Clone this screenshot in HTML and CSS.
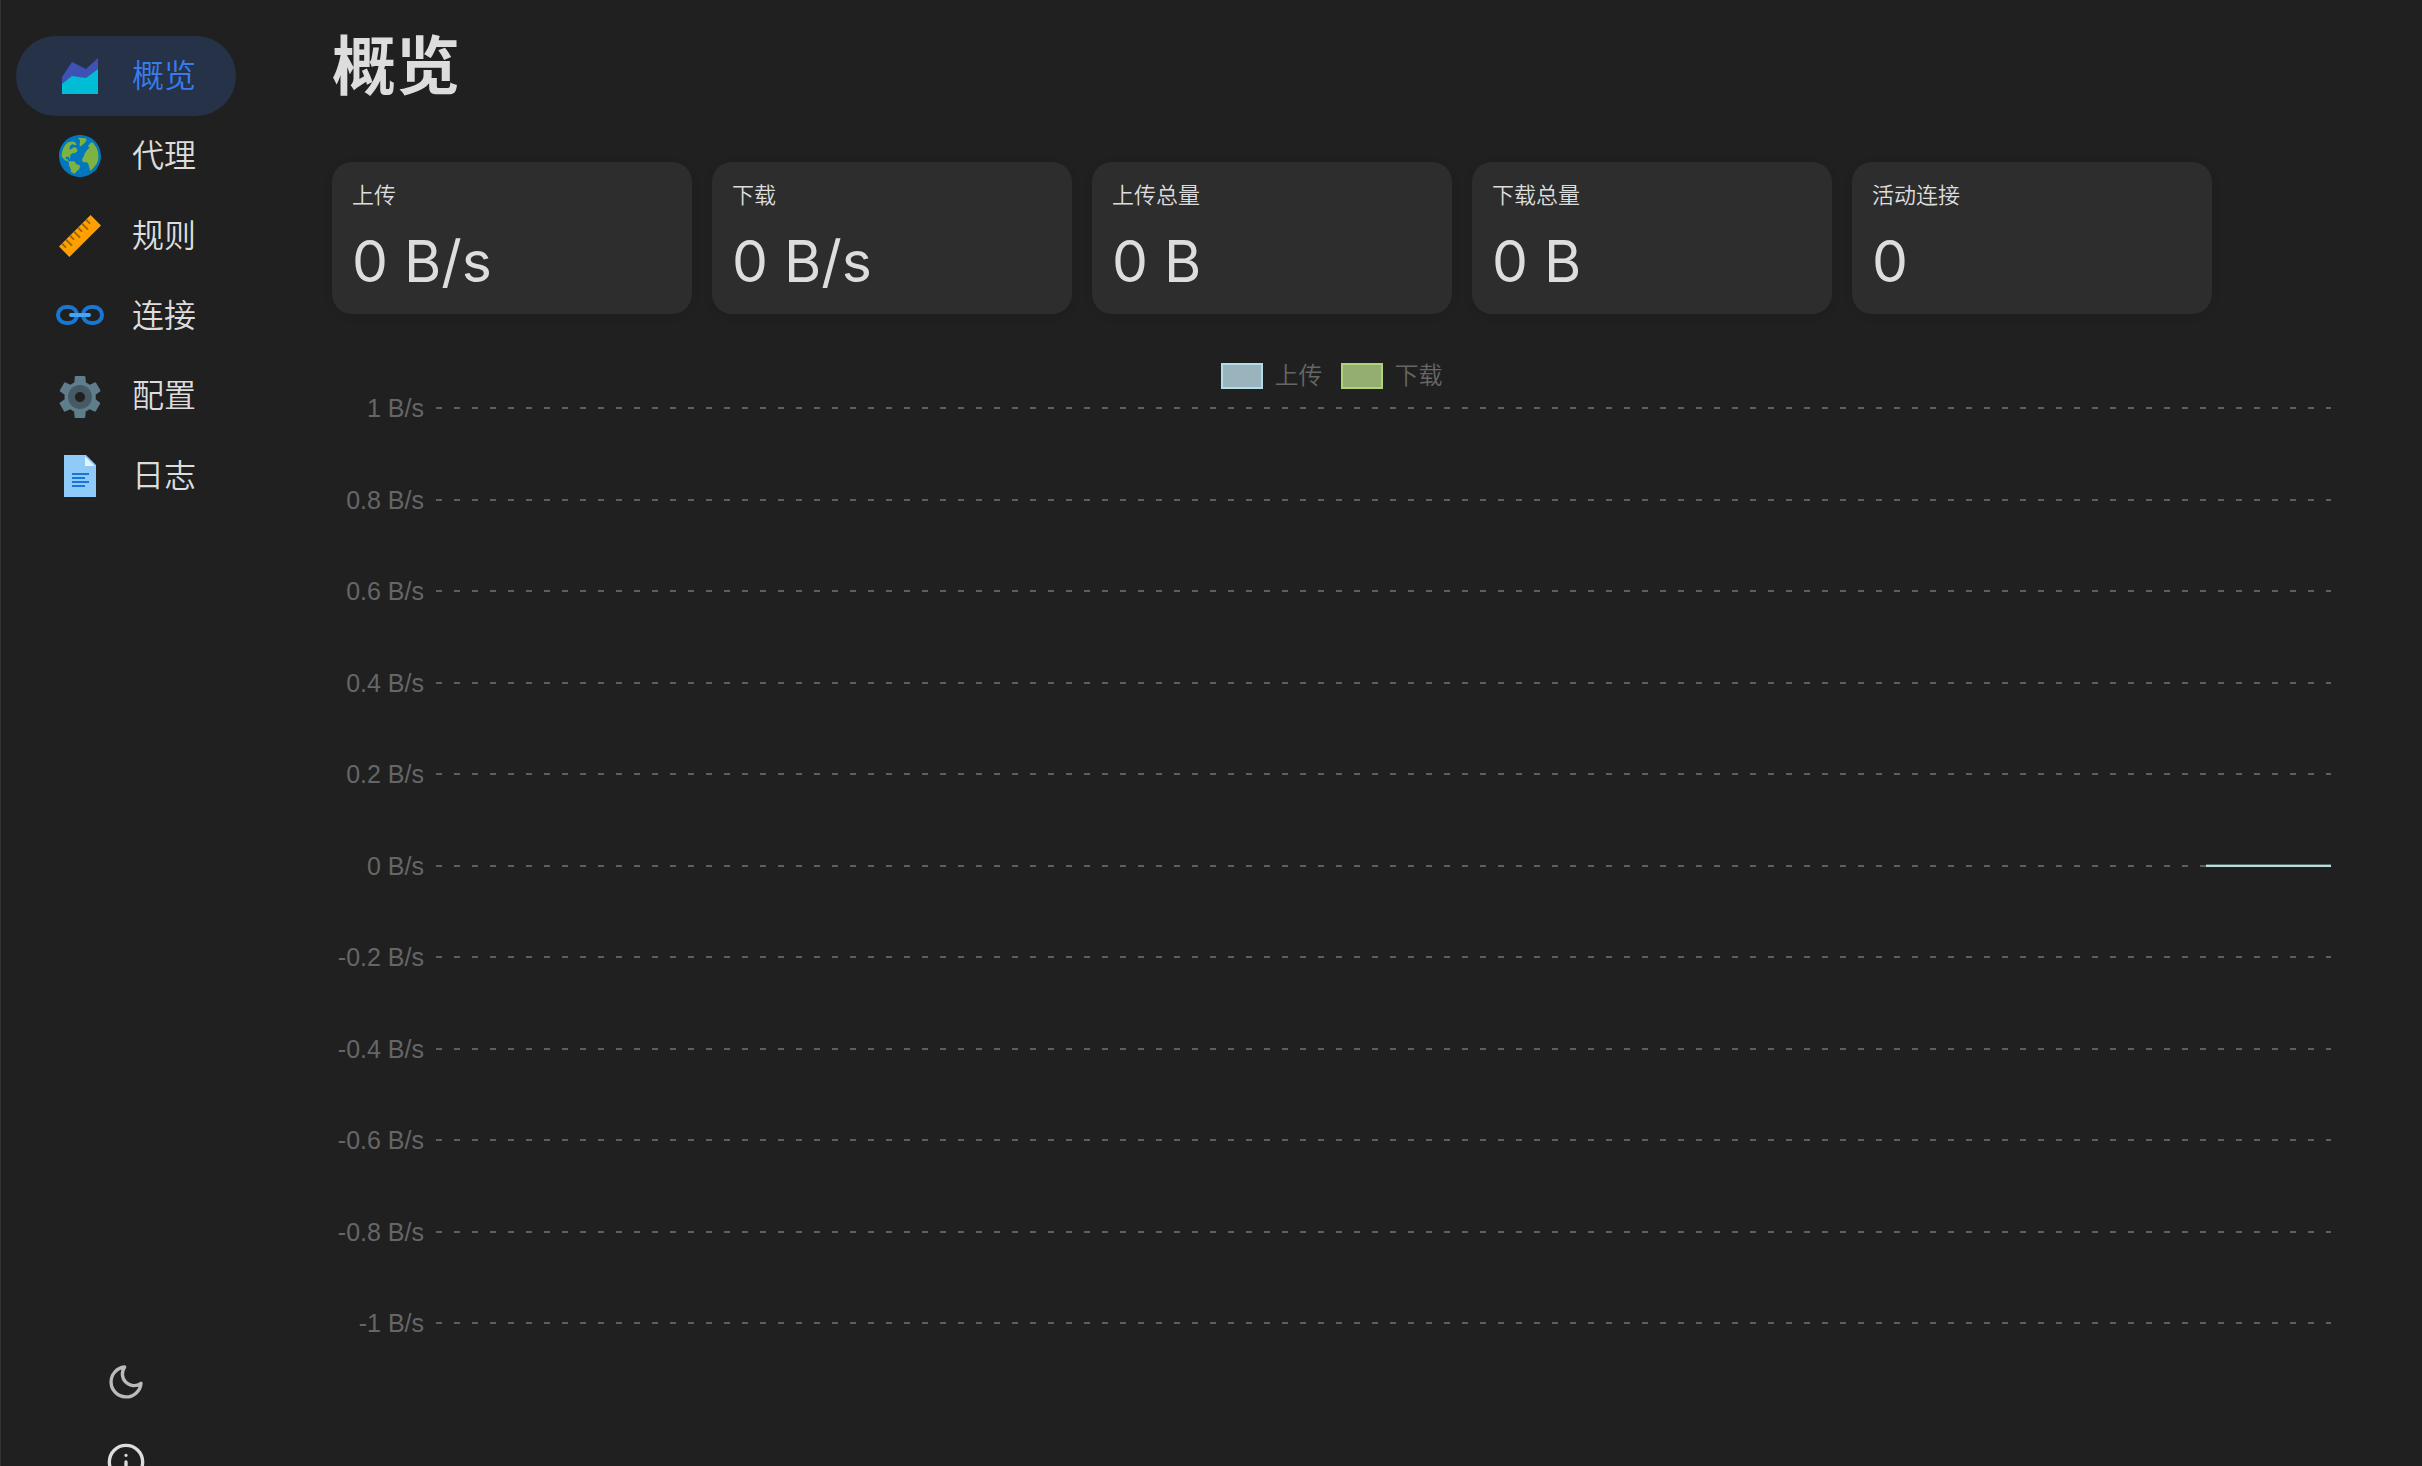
FILE: index.html
```
<!DOCTYPE html>
<html lang="zh-CN">
<head>
    <meta charset="UTF-8">
    <meta name="viewport" content="width=device-width, initial-scale=1.0">
    <title>概览</title>
    <link rel="stylesheet" href="styles.css">
</head>
<body>

    <aside class="sidebar">
        <nav class="nav">
            <a class="nav-item active" href="#">
                <svg class="nav-icon" viewBox="0 0 48 48">
                    <path fill="#3f51b5" d="M42 37H6V25l10-15 14 7L42 6z"/>
                    <path fill="#00bcd4" d="M42 42H6V32l10-8 14 2 12-9z"/>
                </svg>
                <span>概览</span>
            </a>
            <a class="nav-item" href="#proxies">
                <svg class="nav-icon" viewBox="0 0 48 48">
                    <circle cx="24" cy="24" r="20" fill="#7cb342"/>
                    <path fill="#0277bd" d="M45 24c0 11.7-9.5 21-21 21S3 35.700 3 24S12.300 3 24 3s21 9.300 21 21m-21.200 9.700c0-.4-.2-.6-.6-.8c-1.300-.4-2.500-.4-3.600-1.500c-.2-.4-.2-.8-.4-1.300c-.4-.4-1.500-.6-2.100-.8h-4.200c-.6-.2-1.100-1.100-1.500-1.700c0-.2 0-.6-.4-.6c-.4-.2-.8.2-1.300 0c-.2-.2-.2-.4-.2-.6c0-.6.4-1.300.8-1.700c.6-.4 1.300.2 1.900.2c.2 0 .2 0 .4.2c.6.2.8 1 .8 1.700v.4c0 .2.2.2.4.2c.2-1.100.2-2.100.4-3.200c0-1.300 1.300-2.500 2.300-2.900c.4-.2.6.2 1.100 0c1.300-.4 4.400-1.700 3.800-3.400c-.4-1.500-1.700-2.900-3.400-2.700c-.4.2-.6.4-1 .6c-.6.4-1.900 1.700-2.500 1.700c-1.100-.2-1.100-1.700-.8-2.300c.2-.8 2.100-3.600 3.400-3.100l.8.8c.4.2 1.100.2 1.700.2c.2 0 .4 0 .6-.2c.2-.2.2-.2.2-.4c0-.6-.6-1.300-1-1.700s-1.100-.8-1.700-1.100c-2.100-.6-5.500.2-7.100 1.700s-2.900 4-3.800 6.100c-.4 1.300-.8 2.900-1 4.400c-.2 1-.4 1.900.2 2.900c.6 1.300 1.900 2.500 3.200 3.400c.8.6 2.500.6 3.400 1.700c.6.8.4 1.900.4 2.900c0 1.300.8 2.300 1.300 3.400c.2.6.4 1.500.6 2.100c0 .2.2 1.500.2 1.700c1.300.6 2.300 1.300 3.800 1.700c.2 0 1-1.300 1-1.500c.6-.6 1.100-1.500 1.700-1.900c.4-.2.8-.4 1.300-.8c.4-.4.6-1.300.8-1.900c.1-.5.3-1.300.1-1.900m.4-19.400c.2 0 .4-.2.8-.4c.6-.4 1.300-1.100 1.900-1.500c.6-.4 1.300-1.100 1.700-1.500c.6-.4 1.100-1.300 1.300-1.900c.2-.4.8-1.300.6-1.900c-.2-.4-1.300-.6-1.700-.8c-1.700-.4-3.100-.6-4.800-.6c-.6 0-1.500.2-1.700.8c-.2 1.100.6.8 1.500 1.100c0 0 .2 1.700.2 1.900c.2 1-.4 1.700-.4 2.700c0 .6 0 1.700.4 2.100h.2zM41.800 29c.2-.4.2-1.100.4-1.500c.2-1 .2-2.100.2-3.100c0-2.100-.2-4.200-.8-6.100c-.4-.6-.6-1.300-.8-1.900c-.4-1.100-1-2.100-1.900-2.900c-.8-1.100-1.900-4-3.800-3.100c-.6.2-1 1-1.500 1.500c-.4.6-.8 1.300-1.300 1.900c-.2.2-.4.6-.2.8c0 .2.2.2.4.2c.4.2.6.2 1 .4c.2 0 .4.2.2.4c0 0 0 .2-.2.2c-1 1.100-2.100 1.900-3.100 2.900c-.2.2-.4.6-.4.8s.2.2.2.4s-.2.2-.4.4c-.4.2-.8.4-1.100.6c-.2.4 0 1.100-.2 1.500c-.2 1.100-.8 1.900-1.300 2.900c-.4.6-.6 1.300-1 1.900c0 .8-.2 1.500.2 2.100c1 1.500 2.900.6 4.400 1.300c.4.2.8.2 1.100.6c.6.6.6 1.700.8 2.300c.2.8.4 1.700.8 2.500c.2 1 .6 2.100.8 2.900c1.900-1.500 3.600-3.100 4.800-5.200c1.500-1.300 2.100-3 2.700-4.700"/>
                </svg>
                <span>代理</span>
            </a>
            <a class="nav-item" href="#rules">
                <svg class="nav-icon" viewBox="0 0 48 48">
                    <path fill="#ffa000" d="M3 34.600 34.600 3 45 13.400 13.400 45z"/>
                    <path fill="none" stroke="#9e6400" stroke-width="2" d="m6 31.600 4 4m0-8 6 6m-2-10 4 4m0-8 6 6m-2-10 4 4m0-8 6 6M30 7.600l4 4"/>
                </svg>
                <span>规则</span>
            </a>
            <a class="nav-item" href="#connections">
                <svg class="nav-icon" viewBox="0 0 48 48">
                    <g fill="none" stroke="#1976d2" stroke-width="4">
                        <rect x="2" y="15" width="19" height="16" rx="8"/>
                        <rect x="27" y="15" width="19" height="16" rx="8"/>
                    </g>
                    <rect x="13" y="21" width="22" height="4" rx="2" fill="#42a5f5"/>
                </svg>
                <span>连接</span>
            </a>
            <a class="nav-item" href="#config">
                <svg class="nav-icon" viewBox="0 0 48 48">
                    <path fill="#607d8b" d="M39.600 27.200c.1-.7.2-1.400.2-2.200s-.1-1.500-.2-2.200l4.500-3.200c.4-.3.6-.9.3-1.400L40 10.800c-.3-.5-.8-.7-1.300-.4l-5 2.300c-1.200-.9-2.400-1.600-3.800-2.200l-.5-5.500c-.1-.5-.5-.9-1-.9h-8.600c-.5 0-1 .4-1 .9l-.5 5.500c-1.400.6-2.700 1.300-3.800 2.200l-5-2.300c-.5-.2-1.100 0-1.300.4l-4.300 7.400c-.3.5-.1 1.100.3 1.400l4.500 3.200c-.1.7-.2 1.400-.2 2.200s.1 1.500.2 2.200L4 30.400c-.4.3-.6.9-.3 1.400L8 39.200c.3.5.8.7 1.300.4l5-2.300c1.200.9 2.400 1.600 3.800 2.200l.5 5.500c.1.5.5.9 1 .9h8.600c.5 0 1-.4 1-.9l.5-5.500c1.400-.6 2.700-1.300 3.800-2.200l5 2.300c.5.2 1.100 0 1.300-.4l4.300-7.400c.3-.5.1-1.100-.3-1.400zM24 35c-5.500 0-10-4.500-10-10s4.500-10 10-10s10 4.500 10 10s-4.500 10-10 10"/>
                    <path fill="#455a64" d="M24 13c-6.600 0-12 5.400-12 12s5.400 12 12 12s12-5.400 12-12s-5.400-12-12-12m0 17c-2.800 0-5-2.200-5-5s2.200-5 5-5s5 2.200 5 5s-2.200 5-5 5"/>
                </svg>
                <span>配置</span>
            </a>
            <a class="nav-item" href="#logs">
                <svg class="nav-icon" viewBox="0 0 48 48">
                    <path fill="#90caf9" d="M40 45H8V3h22l10 10z"/>
                    <path fill="#e1f5fe" d="M38.500 14H29V4.500z"/>
                    <path fill="#1976d2" d="M16 21h17v2H16zm0 4h13v2H16zm0 4h17v2H16zm0 4h13v2H16z"/>
                </svg>
                <span>日志</span>
            </a>
        </nav>
        <div class="sidebar-footer">
            <button class="icon-btn theme-btn" type="button" aria-label="主题">
                <svg class="line-icon" viewBox="0 0 24 24">
                    <path d="M21 12.790A9 9 0 1 1 11.210 3 7 7 0 0 0 21 12.790z"/>
                </svg>
            </button>
            <a class="icon-btn" href="#about" aria-label="关于">
                <svg class="line-icon" viewBox="0 0 24 24">
                    <circle cx="12" cy="12" r="10"/>
                    <path d="M12 16v-4M12 8h.01"/>
                </svg>
            </a>
        </div>
    </aside>

    <main class="content">
        <h1>概览</h1>

        <section class="cards">
            <div class="card">
                <div class="card-label">上传</div>
                <div class="card-value">0 B/s</div>
            </div>
            <div class="card">
                <div class="card-label">下载</div>
                <div class="card-value">0 B/s</div>
            </div>
            <div class="card">
                <div class="card-label">上传总量</div>
                <div class="card-value">0 B</div>
            </div>
            <div class="card">
                <div class="card-label">下载总量</div>
                <div class="card-value">0 B</div>
            </div>
            <div class="card">
                <div class="card-label">活动连接</div>
                <div class="card-value">0</div>
            </div>
        </section>

        <section class="chart">
            <div class="legend">
                <div class="legend-item"><span class="swatch up"></span>上传</div>
                <div class="legend-item"><span class="swatch down"></span>下载</div>
            </div>
            <div class="plot">
                <div class="tick"><span class="tick-label">1 B/s</span><div class="grid-line"></div></div>
                <div class="tick"><span class="tick-label">0.8 B/s</span><div class="grid-line"></div></div>
                <div class="tick"><span class="tick-label">0.6 B/s</span><div class="grid-line"></div></div>
                <div class="tick"><span class="tick-label">0.4 B/s</span><div class="grid-line"></div></div>
                <div class="tick"><span class="tick-label">0.2 B/s</span><div class="grid-line"></div></div>
                <div class="tick"><span class="tick-label">0 B/s</span><div class="grid-line"><div class="series"></div></div></div>
                <div class="tick"><span class="tick-label">-0.2 B/s</span><div class="grid-line"></div></div>
                <div class="tick"><span class="tick-label">-0.4 B/s</span><div class="grid-line"></div></div>
                <div class="tick"><span class="tick-label">-0.6 B/s</span><div class="grid-line"></div></div>
                <div class="tick"><span class="tick-label">-0.8 B/s</span><div class="grid-line"></div></div>
                <div class="tick"><span class="tick-label">-1 B/s</span><div class="grid-line"></div></div>
            </div>
        </section>
    </main>

</body>
</html>
```
FILE: styles.css
```
* {
    box-sizing: border-box;
}
body {
    margin: 0;
    height: 100vh;
    display: flex;
    overflow: hidden;
    background-color: #202020;
    color: #ddd;
    font-family: Inter, "Noto Sans CJK SC", sans-serif;
    box-shadow: inset 1px 0 #333;
}
a {
    color: inherit;
    text-decoration: none;
}

/* sidebar */
.sidebar {
    flex: none;
    width: 252px;
    height: calc(100vh + 36px);
    padding-top: 36px;
    display: flex;
    flex-direction: column;
    justify-content: space-between;
}
.nav {
    display: flex;
    flex-direction: column;
    padding: 0 16px;
}
.nav-item {
    display: flex;
    align-items: center;
    gap: 28px;
    height: 80px;
    padding: 0 40px;
    border-radius: 40px;
    font-size: 32px;
    font-weight: 350;
    line-height: 48px;
    white-space: nowrap;
}
.nav-item.active {
    background-color: #253248;
    color: #387cec;
}
.nav-icon {
    flex: none;
    width: 48px;
    height: 48px;
}
.sidebar-footer {
    display: flex;
    flex-direction: column;
    align-items: center;
}
.icon-btn {
    display: flex;
    align-items: center;
    justify-content: center;
    width: 80px;
    height: 80px;
    padding: 0;
    border: none;
    background: none;
    color: #ddd;
    cursor: pointer;
}
.theme-btn {
    color: #bbb;
}
.line-icon {
    width: 40px;
    height: 40px;
    fill: none;
    stroke: currentColor;
    stroke-width: 2;
    stroke-linecap: round;
    stroke-linejoin: round;
}

/* content */
.content {
    flex: 1;
    display: flex;
    flex-direction: column;
    padding: 20px 91px 131px 80px;
}
h1 {
    margin: 0 0 50px;
    font-size: 64px;
    line-height: 92px;
    font-weight: 700;
}
.cards {
    display: flex;
    gap: 20px;
}
.card {
    width: 360px;
    padding: 16px 20px;
    border-radius: 20px;
    background-color: #2d2d2d;
    box-shadow: 0 2px 10px rgba(0, 0, 0, 0.1);
}
.card-label {
    font-size: 22px;
    font-weight: 350;
    line-height: 34px;
}
.card-value {
    margin-top: 15px;
    margin-bottom: 1px;
    font-size: 57px;
    line-height: 70px;
}

/* chart */
.chart {
    flex: 1;
    display: flex;
    flex-direction: column;
    margin-top: 44px;
    color: #666;
    font-family: "Liberation Sans", "Noto Sans CJK SC", sans-serif;
    font-size: 24px;
    line-height: 24px;
}
.legend {
    display: flex;
    justify-content: center;
    gap: 18px;
    padding: 5px 0;
    font-weight: 350;
}
.legend-item {
    display: flex;
    align-items: center;
    gap: 12px;
    height: 26px;
}
.swatch {
    width: 42px;
    height: 26px;
    border: 2px solid;
}
.swatch.up {
    background-color: #9ab4be;
    border-color: #b3dce8;
}
.swatch.down {
    background-color: #94ad70;
    border-color: #add47c;
}
.plot {
    flex: 1;
    display: flex;
    flex-direction: column;
    justify-content: space-between;
    padding-top: 2px;
}
.tick {
    display: flex;
    align-items: center;
    gap: 12px;
}
.tick-label {
    width: 92px;
    font-size: 25px;
    text-align: right;
    white-space: nowrap;
}
.grid-line {
    position: relative;
    flex: 1;
    height: 2px;
    background: repeating-linear-gradient(to right, #5e5e5e 0 6px, transparent 6px 18px);
}
/* both series are flat at zero, the upload line covers the download one */
.series {
    position: absolute;
    right: 0;
    bottom: 0;
    width: 6.6%;
    height: 3px;
    background-color: #b5dce8;
    border-top: 1px solid #5c6b5c;
}
```
